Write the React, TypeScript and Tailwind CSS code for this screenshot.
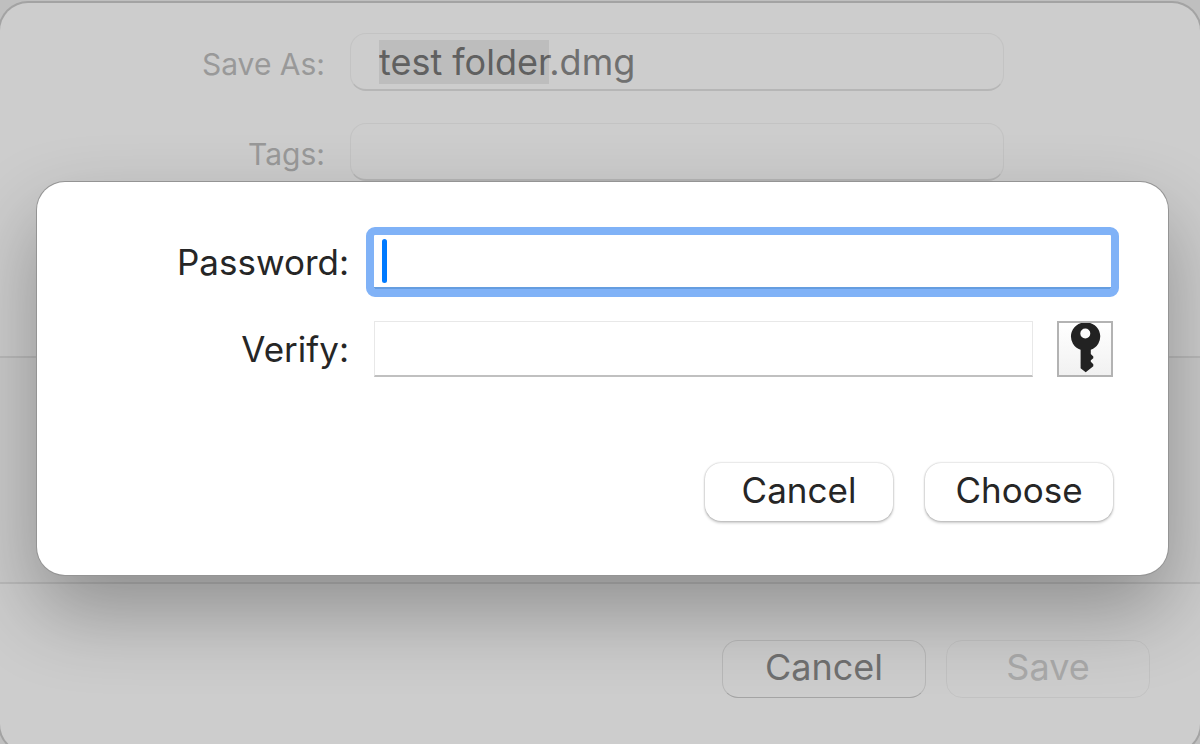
import { useEffect, useRef } from "react";

function KeyIcon() {
    return (
        <svg viewBox="0 0 52 52" className="w-full h-full" aria-hidden="true">
            <path
                fill="#222"
                fillRule="evenodd"
                d="M26.300 -0.500A14 14 0 0 0 21.600 26.800V45.300L26.700 49.300L34.300 43.200V41.300L31.800 38.800V37.200L34.300 35.200V33.500L31.800 31V26.700A14 14 0 0 0 26.300 -0.500ZM26.300 5.500A5 5 0 1 1 26.300 15.500A5 5 0 1 1 26.300 5.500Z"
            />
        </svg>
    );
}

function SaveWindow() {
    const nameRef = useRef<HTMLInputElement>(null);

    // only the base name is selected, the extension stays out of it
    useEffect(() => {
        nameRef.current?.focus();
        nameRef.current?.setSelectionRange(0, "test folder".length);
    }, []);

    const label = "pt-1 text-right text-[30px] text-[#999]";
    const field =
        "w-full h-[58px] rounded-2xl border border-[#c3c3c3] border-b-2 border-b-[#b6b6b6] bg-transparent px-7 text-4xl text-[#707070] outline-none selection:bg-[#bdbdbd] selection:text-[#606060]";

    return (
        <main className="rounded-[28px] bg-[#cdcdcd] ring-2 ring-[#a3a3a3]">
            <div className="grid grid-cols-[325px_1fr] auto-rows-[58px] items-center gap-x-[25px] gap-y-8 h-[355px] pt-[30px] pr-[196px] border-b-2 border-[#bababa]">
                <label htmlFor="name" className={label}>Save As:</label>
                <input id="name" ref={nameRef} defaultValue="test folder.dmg" className={field} />
                <label htmlFor="tags" className={label}>Tags:</label>
                <input id="tags" className={field} />
            </div>

            <div className="h-[226px] bg-[#cacaca] border-b-2 border-[#bababa]"></div>

            <div className="flex justify-end gap-5 pt-14 pr-[50px] h-[168px]">
                <button className="w-[204px] h-[58px] pb-1 rounded-2xl border border-black/10 border-b-black/20 text-4xl text-[#707070]">Cancel</button>
                <button disabled className="w-[204px] h-[58px] pb-1 rounded-2xl border border-black/5 text-4xl text-[#a9a9a9]">Save</button>
            </div>
        </main>
    );
}

function PasswordDialog() {
    const label = "text-right text-[35px] leading-10 text-[#262626]";
    const button =
        "w-[188px] h-[58px] pb-1 rounded-2xl bg-white text-[35px] leading-10 text-[#262626] shadow-[0_0_2px_rgba(0,0,0,0.3),0_2px_3px_rgba(0,0,0,0.2)]";

    return (
        <section
            role="dialog"
            aria-label="Password"
            className="absolute top-[182px] left-[37px] right-8 rounded-[28px] bg-white pt-[53px] pr-[55px] pb-[54px] shadow-[0_0_0_1px_#949494,0_36px_80px_rgba(0,0,0,0.3)]"
        >
            <div className="grid grid-cols-[312px_1fr] items-center gap-x-[25px] gap-y-8">
                <label htmlFor="password" className={label}>Password:</label>
                <div className="relative mr-0.5">
                    <input
                        id="password"
                        type="password"
                        className="block w-full h-[54px] px-3 text-4xl bg-white border-b-2 border-[#659de0] outline-8 outline-[#80b2f7] rounded-[1px]"
                    />
                    <span className="absolute left-2 top-1 w-[5px] h-11 rounded-full bg-[#007aff]"></span>
                </div>

                <label htmlFor="verify" className={label}>Verify:</label>
                <div className="flex gap-6">
                    <input
                        id="verify"
                        type="password"
                        className="flex-1 min-w-0 h-14 px-3 text-4xl bg-white border border-[#e8e8e8] border-b-2 border-b-[#c0c0c0]"
                    />
                    <button aria-label="Password Assistant" className="size-14 border-2 border-[#b3b3b3] bg-linear-to-b from-white to-[#f1f1f1]">
                        <KeyIcon />
                    </button>
                </div>
            </div>

            <div className="flex justify-end gap-8 mt-[86px]">
                <button className={button}>Cancel</button>
                <button className={button}>Choose</button>
            </div>
        </section>
    );
}

export default function App() {
    return (
        <div className="relative h-screen overflow-hidden bg-[#bfbfbf] pt-[3px] font-['Inter','Liberation_Sans',sans-serif]">
            <SaveWindow />
            <PasswordDialog />
        </div>
    );
}
